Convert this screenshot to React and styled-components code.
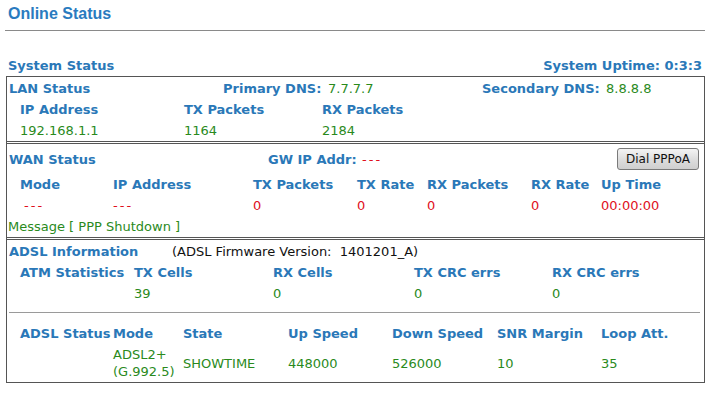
import React from "react";
import styled, { createGlobalStyle } from "styled-components";

const GlobalStyle = createGlobalStyle`
  body {
    margin: 0;
    background: #ffffff;
    font-family: "DejaVu Sans", Verdana, sans-serif;
  }
`;

const tones = {
  label: "#2a78b8",
  value: "#2a8a1c",
  alert: "#e0101c",
  plain: "#111111"
};

const Page = styled.div`
  width: 700px;
  padding: 0 0 0 5px;
`;

const Title = styled.h1`
  margin: 4px 0 0 3px;
  height: 20px;
  line-height: 20px;
  font-family: "Liberation Sans", Arial, sans-serif;
  font-size: 16px;
  font-weight: bold;
  color: #2a7bbf;
`;

const Rule = styled.div`
  margin-top: 6px;
  height: 1px;
  background: #8a8a8a;
`;

const SystemBar = styled.div`
  display: flex;
  justify-content: space-between;
  align-items: center;
  margin-top: 24px;
  height: 21px;
  padding: 0 3px 0 3px;
  font-size: 13px;
  font-weight: bold;
  color: ${tones.label};
`;

const Box = styled.div`
  margin-left: 1px;
  border: 1px solid #555555;
`;

const Section = styled.div`
  padding-top: ${props => props.$top || 0}px;
  border-top: ${props => (props.$divided ? "3px double #555555" : "none")};
`;

const Row = styled.div`
  display: grid;
  grid-template-columns: ${props => props.$cols};
  align-items: center;
  height: ${props => props.$height || 21}px;
  padding-left: ${props => props.$indent || 0}px;
  padding-right: ${props => props.$right || 0}px;
  font-size: 13px;
`;

const Cell = styled.div`
  color: ${props => tones[props.$tone || "value"]};
  font-weight: ${props => (props.$tone === "label" ? "bold" : "normal")};
  padding-left: ${props => props.$shift || 0}px;
  line-height: 17px;
  white-space: ${props => (props.$wrap ? "normal" : "pre")};
`;

const Dashes = styled(Cell).attrs({ $tone: "alert", children: "---" })`
  letter-spacing: 2px;
`;

const Hairline = styled.div`
  margin: 8px 4px 10px 2px;
  height: 1px;
  background: #9a9a9a;
`;

const Message = styled.div`
  height: 21px;
  line-height: 21px;
  padding-left: 1px;
  font-size: 13px;
  color: ${tones.value};
`;

const DialButton = styled.button`
  justify-self: end;
  width: 82px;
  height: 22px;
  padding: 0;
  border: 1px solid #7a7a7a;
  border-radius: 3px;
  background: linear-gradient(#f4f4f4, #dedede 50%, #cfcfcf);
  font-family: "DejaVu Sans", Tahoma, sans-serif;
  font-size: 12px;
  color: #111111;
`;

const Cells = ({ items, tone, shifts = [] }) =>
  items.map((text, i) => (
    <Cell key={i} $tone={tone} $shift={shifts[i]}>
      {text}
    </Cell>
  ));

const LAN_COLS = "164px 138px 1fr";
const WAN_COLS = "93px 140px 104px 70px 104px 70px 1fr";
const ATM_COLS = "114px 139px 141px 138px 1fr";
const ADSL_COLS = "93px 70px 105px 104px 105px 104px 1fr";

export default function App() {
  return (
    <Page>
      <GlobalStyle />
      <Title>Online Status</Title>
      <Rule />
      <SystemBar>
        <span>System Status</span>
        <span>System Uptime: 0:3:3</span>
      </SystemBar>
      <Box>
        <Section $top={1}>
          <Row $cols="214px 105px 154px 124px 1fr" $indent={2}>
            <Cell $tone="label">LAN Status</Cell>
            <Cell $tone="label">Primary DNS:</Cell>
            <Cell>7.7.7.7</Cell>
            <Cell $tone="label">Secondary DNS:</Cell>
            <Cell>8.8.8.8</Cell>
          </Row>
          <Row $cols={LAN_COLS} $indent={13}>
            <Cells tone="label" items={["IP Address", "TX Packets", "RX Packets"]} />
          </Row>
          <Row $cols={LAN_COLS} $indent={13}>
            <Cells items={["192.168.1.1", "1164", "2184"]} />
          </Row>
        </Section>

        <Section $divided>
          <Row $cols="259px 94px 1fr auto" $indent={2} $right={5} $height={30}>
            <Cell $tone="label">WAN Status</Cell>
            <Cell $tone="label">GW IP Addr:</Cell>
            <Dashes />
            <DialButton type="button">Dial PPPoA</DialButton>
          </Row>
          <Row $cols={WAN_COLS} $indent={13}>
            <Cells
              tone="label"
              items={["Mode", "IP Address", "TX Packets", "TX Rate", "RX Packets", "RX Rate", "Up Time"]}
            />
          </Row>
          <Row $cols={WAN_COLS} $indent={13}>
            <Dashes $shift={4} />
            <Dashes />
            <Cells tone="alert" items={["0", "0", "0", "0", "00:00:00"]} />
          </Row>
          <Message>Message [ PPP Shutdown ]</Message>
        </Section>

        <Section $divided $top={1}>
          <Row $cols="163px 1fr" $indent={2}>
            <Cell $tone="label">ADSL Information</Cell>
            <Cell $tone="plain">(ADSL Firmware Version:  1401201_A)</Cell>
          </Row>
          <Row $cols={ATM_COLS} $indent={13}>
            <Cells
              tone="label"
              items={["ATM Statistics", "TX Cells", "RX Cells", "TX CRC errs", "RX CRC errs"]}
            />
          </Row>
          <Row $cols={ATM_COLS} $indent={13}>
            <Cells items={["", "39", "0", "0", "0"]} />
          </Row>
          <Hairline />
          <Row $cols={ADSL_COLS} $indent={13}>
            <Cells
              tone="label"
              items={["ADSL Status", "Mode", "State", "Up Speed", "Down Speed", "SNR Margin", "Loop Att."]}
            />
          </Row>
          <Row $cols={ADSL_COLS} $indent={13} $height={38}>
            <Cell />
            <Cell $wrap>ADSL2+ (G.992.5)</Cell>
            <Cells items={["SHOWTIME", "448000", "526000", "10", "35"]} />
          </Row>
        </Section>
      </Box>
    </Page>
  );
}
